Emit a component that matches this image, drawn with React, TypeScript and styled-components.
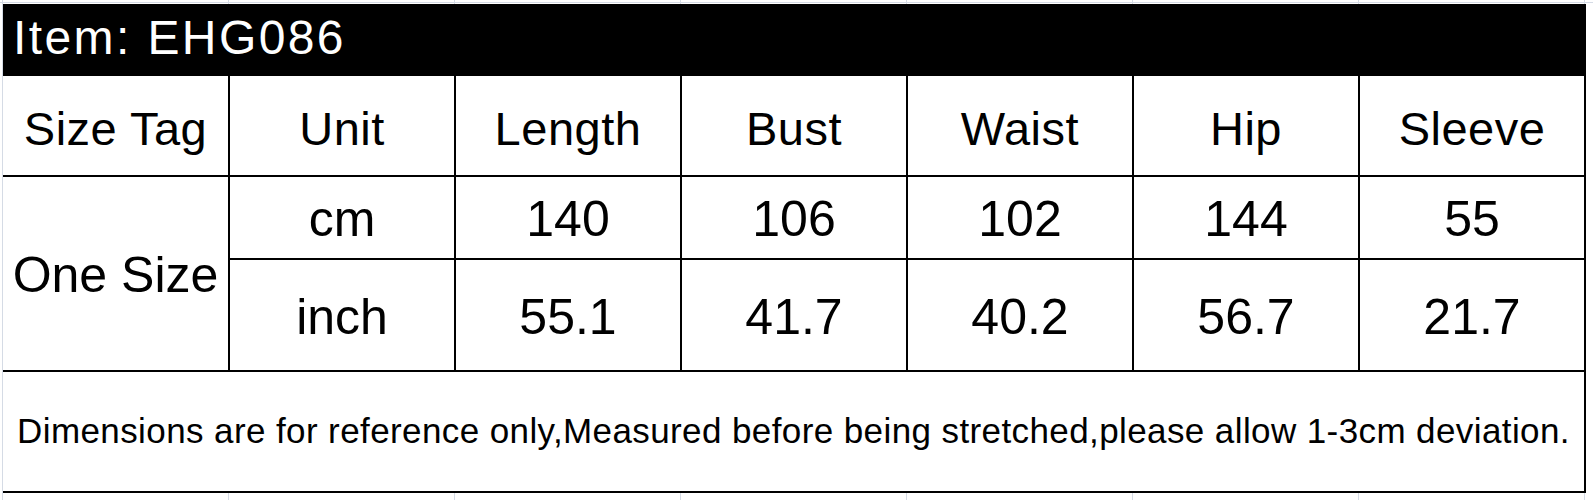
import React from "react";
import styled, { createGlobalStyle } from "styled-components";

const GlobalStyle = createGlobalStyle`
  html, body {
    margin: 0;
    padding: 0;
    background: #ffffff;
  }
  * { box-sizing: border-box; }
`;

const Sheet = styled.div`
  width: 1593px;
  height: 500px;
  padding: 4px 0 0 3px;
  background-color: #ffffff;
  background-image:
    linear-gradient(to bottom, #d5dbe5 1px, transparent 1px),
    linear-gradient(to right, #d5dbe5 1px, transparent 1px);
  background-size: 100% 500px, 226px 100%;
  background-position: 0 2px, 2px 0;
  background-repeat: no-repeat, repeat-x;
  overflow: hidden;
`;

const Chart = styled.div`
  width: 1583px;
  display: grid;
  grid-template-columns: 225px repeat(6, 224px);
  grid-template-rows: 70px 99px 81px 110px 119px;
  gap: 2px;
  padding: 0 2px 2px 0;
  background: #000000;
  font-family: "Liberation Sans", Arial, sans-serif;
  color: #000000;
`;

const TitleBar = styled.div`
  grid-column: 1 / -1;
  display: flex;
  align-items: center;
  padding: 0 0 3px 10px;
  background: #000000;
  color: #ffffff;
  font-size: 48px;
  letter-spacing: 2.4px;
  white-space: nowrap;
`;

const Cell = styled.div<{ $size: number; $shift?: number; $span?: number }>`
  display: flex;
  align-items: center;
  justify-content: center;
  background: #ffffff;
  font-size: ${(p) => p.$size}px;
  white-space: nowrap;
  padding-top: ${(p) => Math.max(0, p.$shift ?? 0) * 2}px;
  padding-bottom: ${(p) => Math.max(0, -(p.$shift ?? 0)) * 2}px;
  ${(p) => (p.$span ? `grid-row: span ${p.$span};` : "")}
`;

const HeadCell = styled(Cell)`
  letter-spacing: 0.5px;
`;

const NoteCell = styled.div`
  grid-column: 1 / -1;
  display: flex;
  align-items: center;
  justify-content: center;
  padding-bottom: 2px;
  background: #ffffff;
  font-size: 35px;
  letter-spacing: 0.4px;
  white-space: nowrap;
`;

const headers = ["Size Tag", "Unit", "Length", "Bust", "Waist", "Hip", "Sleeve"];
const cm = ["140", "106", "102", "144", "55"];
const inch = ["55.1", "41.7", "40.2", "56.7", "21.7"];

export default function App() {
  return (
    <>
      <GlobalStyle />
      <Sheet>
        <Chart>
          <TitleBar>Item: EHG086</TitleBar>
          {headers.map((h) => (
            <HeadCell key={h} $size={47} $shift={2.5}>
              {h}
            </HeadCell>
          ))}
          <Cell $size={50} $span={2} $shift={1.5}>
            One Size
          </Cell>
          <Cell $size={50} $shift={1.5}>cm</Cell>
          {cm.map((v, i) => (
            <Cell key={"cm" + i} $size={50} $shift={1.5}>
              {v}
            </Cell>
          ))}
          <Cell $size={50} $shift={1.5}>inch</Cell>
          {inch.map((v, i) => (
            <Cell key={"in" + i} $size={50} $shift={1.5}>
              {v}
            </Cell>
          ))}
          <NoteCell>
            Dimensions are for reference only,Measured before being stretched,please allow 1-3cm deviation.
          </NoteCell>
        </Chart>
      </Sheet>
    </>
  );
}
